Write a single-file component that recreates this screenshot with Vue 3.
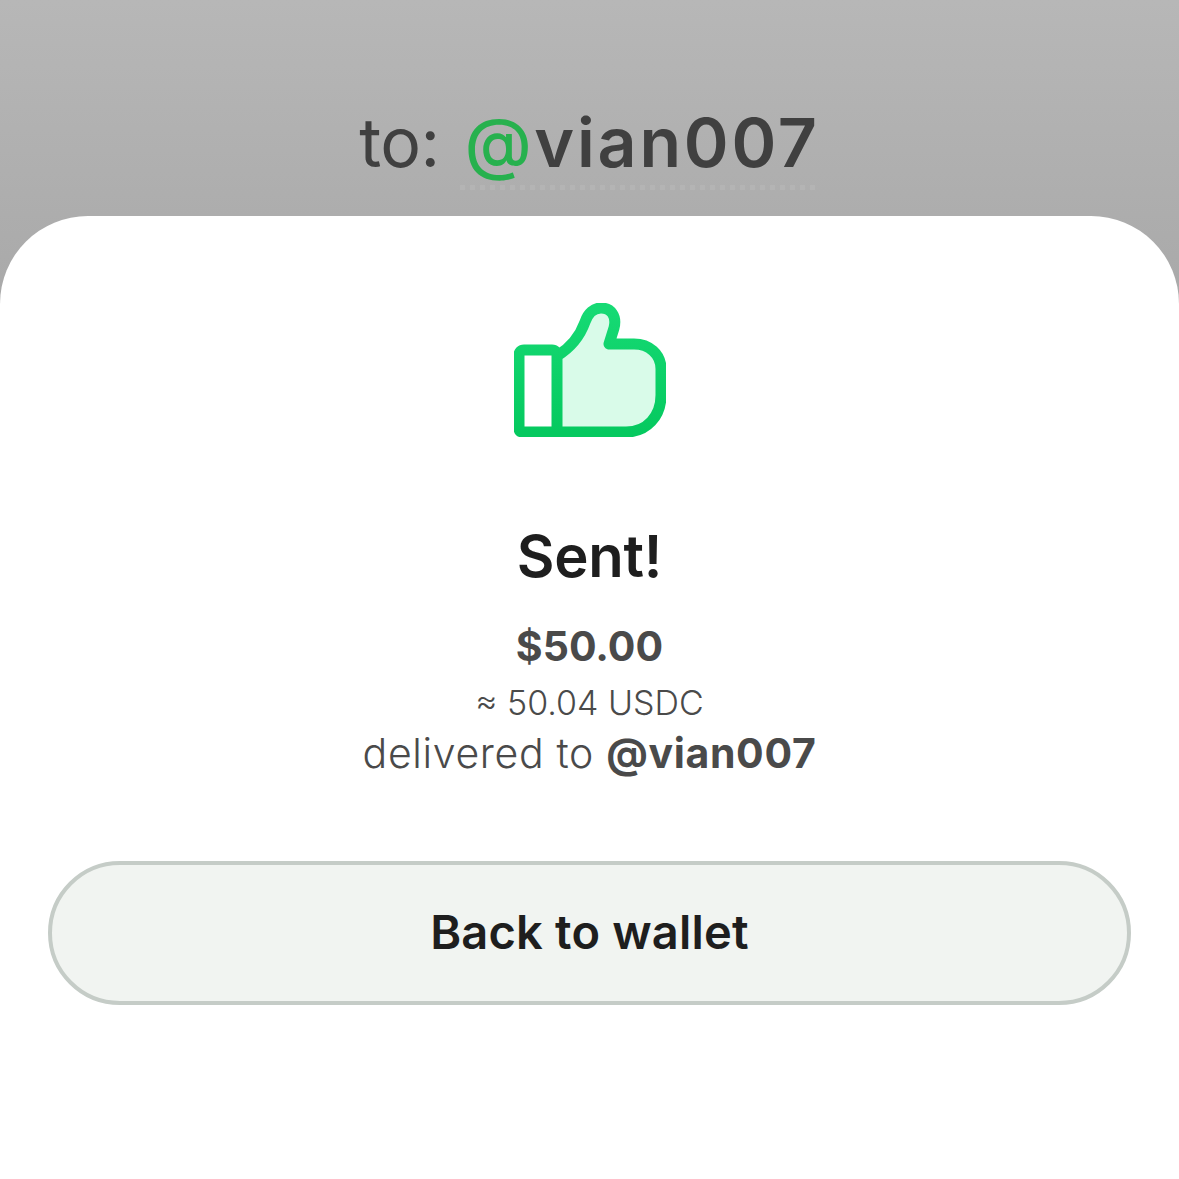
<script setup>
const recipient = '@vian007'
</script>

<template>
  <div class="screen">
    <header class="top">
      <div class="to-line">
        <span class="to-label">to:</span>
        <span class="handle"><span class="at">@</span>vian007</span>
      </div>
    </header>

    <main class="sheet">
      <svg class="thumb" width="152" height="134" viewBox="0 0 152 134" fill="none">
        <defs>
          <linearGradient id="thumbStroke" x1="0" y1="0" x2="0" y2="1">
            <stop offset="0" stop-color="#16da74" />
            <stop offset="1" stop-color="#05c95f" />
          </linearGradient>
        </defs>
        <path
          d="M43 53C56 45 66 33 71 19C74 10 80 5 87 5C97 5 103 13 100 25L95 41H120C135 41 147 51 147 66V92C147 113 133 129 112 129H43Z"
          fill="#d9fbe9"
        />
        <path
          d="M43 53C56 45 66 33 71 19C74 10 80 5 87 5C97 5 103 13 100 25L95 41H120C135 41 147 51 147 66V92C147 113 133 129 112 129H43M10 47H38C41 47 43 49 43 52V129H9C6 129 5 128 5 125V52C5 49 7 47 10 47Z"
          stroke="url(#thumbStroke)"
          stroke-width="11"
          stroke-linejoin="round"
        />
      </svg>

      <h1 class="title">Sent!</h1>
      <div class="amount">$50.00</div>
      <div class="usdc">≈ 50.04 USDC</div>
      <div class="delivered">delivered to <b>{{ recipient }}</b></div>

      <button class="back">Back to wallet</button>
    </main>
  </div>
</template>

<style scoped>
.screen {
  width: 1179px;
  height: 1179px;
  display: flex;
  flex-direction: column;
  overflow: hidden;
  background: linear-gradient(180deg, #b7b7b7 0%, #a9a9a9 300px);
  font-family: Inter, "Noto Sans", sans-serif;
}

.top {
  height: 216px;
  flex-shrink: 0;
  display: flex;
  justify-content: center;
}
.to-line {
  display: flex;
  gap: 20px;
  margin-top: 101px;
  height: 89px;
  font-size: 68px;
  line-height: 82px;
  color: #404040;
}
.to-label {
  font-weight: 400;
  letter-spacing: -0.5px;
}
.handle {
  font-weight: 600;
  letter-spacing: 2.8px;
  padding: 0 0 0 5px;
  background: repeating-linear-gradient(90deg, #b4b4b4 0 5px, transparent 5px 10px) bottom / 100% 5px no-repeat;
}
.at {
  color: #27b14e;
  font-weight: 500;
}

.sheet {
  flex: 1;
  background: #fff;
  border-radius: 88px 88px 0 0;
  display: flex;
  flex-direction: column;
  align-items: center;
  padding: 87px 48px 0;
}
.thumb {
  display: block;
}
.title {
  margin: 85px 0 0;
  font-size: 58px;
  line-height: 68px;
  font-weight: 600;
  letter-spacing: -0.2px;
  color: #1e1e1e;
}
.amount {
  margin-top: 31px;
  font-size: 41px;
  line-height: 50px;
  font-weight: 700;
  color: #4a4a4a;
}
.usdc {
  margin-top: 11px;
  font-size: 34px;
  line-height: 42px;
  font-weight: 300;
  color: #4a4a4a;
}
.delivered {
  margin-top: 3px;
  font-size: 41px;
  line-height: 52px;
  font-weight: 300;
  letter-spacing: 0.65px;
  color: #4a4a4a;
}
.delivered b {
  font-weight: 700;
}
.back {
  margin-top: 82px;
  width: 100%;
  height: 144px;
  padding: 0 0 4px;
  border: 4px solid #c5ccc7;
  border-radius: 72px;
  background: #f1f4f1;
  font-family: inherit;
  font-size: 47px;
  font-weight: 600;
  letter-spacing: 0.2px;
  color: #1e1e1e;
}
</style>
